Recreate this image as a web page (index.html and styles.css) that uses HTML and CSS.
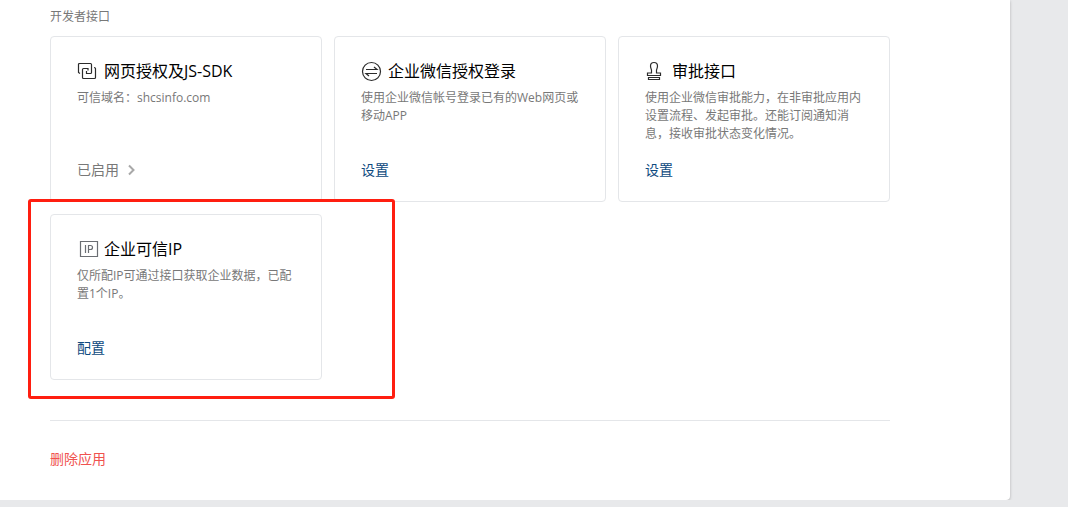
FILE: index.html
```html
<!DOCTYPE html>
<html lang="zh-CN">
<head>
    <meta charset="UTF-8">
    <meta name="viewport" content="width=device-width, initial-scale=1.0">
    <title>开发者接口</title>
    <link rel="stylesheet" href="styles.css">
</head>
<body>
    <main class="panel">
        <h2 class="section-title">开发者接口</h2>

        <div class="cards">
            <section class="card">
                <h3 class="card-title">
                    <svg class="icon" viewBox="0 0 20 20" aria-hidden="true">
                        <path d="M3 12.500l-1.500-1V3.500q0-1 1-1h11q1 0 1 1v8q0 1-1 1h-4v-2.500"/>
                        <path d="M17 6.500q1.500 0 1.500 1v9q0 1-1 1h-11q-1 0-1-1v-8q0-1 1-1h4.500v2"/>
                    </svg>
                    网页授权及JS-SDK
                </h3>
                <p class="card-desc">可信域名：shcsinfo.com</p>
                <a class="card-action enabled" href="#">
                    已启用
                    <svg class="arrow" viewBox="0 0 8 12" aria-hidden="true"><path d="M2 1.500l4.500 4.500-4.500 4.500"/></svg>
                </a>
            </section>

            <section class="card">
                <h3 class="card-title">
                    <svg class="icon" viewBox="0 0 20 20" aria-hidden="true">
                        <circle cx="10.500" cy="10.500" r="9"/>
                        <path d="M5 8.500h11l-3-2.500M16 12.500H5l3 2.500"/>
                    </svg>
                    企业微信授权登录
                </h3>
                <p class="card-desc">使用企业微信帐号登录已有的Web网页或移动APP</p>
                <a class="card-action" href="#">设置</a>
            </section>

            <section class="card">
                <h3 class="card-title">
                    <svg class="icon" viewBox="0 0 20 20" aria-hidden="true">
                        <path d="M6.500 12V9C6 7.500 5.500 6.500 5.500 5c0-2 1.500-3.500 3.500-3.500S12.500 3 12.500 5c0 1.500-.5 2.500-1 4v3h4v2.500h-13V12z"/>
                        <path d="M3.500 16.500h11v2h-11z"/>
                    </svg>
                    审批接口
                </h3>
                <p class="card-desc">使用企业微信审批能力，在非审批应用内设置流程、发起审批。还能订阅通知消息，接收审批状态变化情况。</p>
                <a class="card-action" href="#">设置</a>
            </section>

            <section class="card highlighted">
                <h3 class="card-title">
                    <svg class="icon icon-ip" viewBox="0 0 20 20" aria-hidden="true">
                        <path d="M3.500 2.500h17v15h-17z"/>
                        <path d="M8.500 6v8M11.500 14V6.500h2a2 2 0 0 1 0 4h-2"/>
                    </svg>
                    企业可信IP
                </h3>
                <p class="card-desc">仅所配IP可通过接口获取企业数据，已配置1个IP。</p>
                <a class="card-action" href="#">配置</a>
            </section>
        </div>

        <div class="footer">
            <button class="delete" type="button">删除应用</button>
        </div>
    </main>
</body>
</html>
```
FILE: styles.css
```css
* {
    box-sizing: border-box;
}

body {
    margin: 0;
    background: #e8e9eb;
    font-family: "Open Sans", "Noto Sans CJK SC", sans-serif;
    font-size: 14px;
    line-height: 20px;
    color: #000;
}

.panel {
    margin-right: 58px;
    padding: 7px 120px 31px 50px;
    background: #fff;
    border-bottom-right-radius: 4px;
    box-shadow: 0 1px 3px rgba(0, 0, 0, 0.25);
}

.section-title {
    margin: 0 0 9px;
    font-size: 12px;
    font-weight: normal;
    color: #787878;
}

.cards {
    display: grid;
    grid-template-columns: repeat(3, 1fr);
    gap: 12px;
}

.card {
    display: flex;
    flex-direction: column;
    align-items: flex-start;
    min-height: 166px;
    padding: 22px 20px 21px 26px;
    border: 1px solid #e4e6e9;
    border-radius: 4px;
}

.card-title {
    display: flex;
    align-items: center;
    gap: 7px;
    margin: 0 0 6px;
    font-size: 16px;
    font-weight: normal;
    line-height: 24px;
}

.icon {
    width: 20px;
    height: 20px;
    overflow: visible;
    fill: none;
    stroke: #2b2b2b;
    stroke-width: 1.2;
}

.icon-ip {
    stroke: #6b6e73;
}

.card-desc {
    margin: 0;
    font-size: 12px;
    line-height: 18px;
    color: #787878;
}

.card-action {
    display: flex;
    align-items: center;
    gap: 8px;
    margin-top: auto;
    color: #0d4a80;
    text-decoration: none;
}

.card-action:hover {
    text-decoration: underline;
}

.card-action.enabled {
    color: #787878;
}

.arrow {
    width: 8px;
    height: 12px;
    fill: none;
    stroke: #a8a8a8;
    stroke-width: 2;
}

/* red frame around the card */
.highlighted {
    position: relative;
}

.highlighted::after {
    content: "";
    position: absolute;
    top: -16px;
    right: -74px;
    bottom: -20px;
    left: -23px;
    border: 3px solid #ff1e10;
    border-radius: 3px;
    pointer-events: none;
}

.footer {
    margin-top: 40px;
    padding-top: 28px;
    border-top: 1px solid #e4e6e9;
}

.delete {
    display: block;
    padding: 0;
    border: none;
    background: none;
    font: inherit;
    color: #f0524f;
    cursor: pointer;
}
```
